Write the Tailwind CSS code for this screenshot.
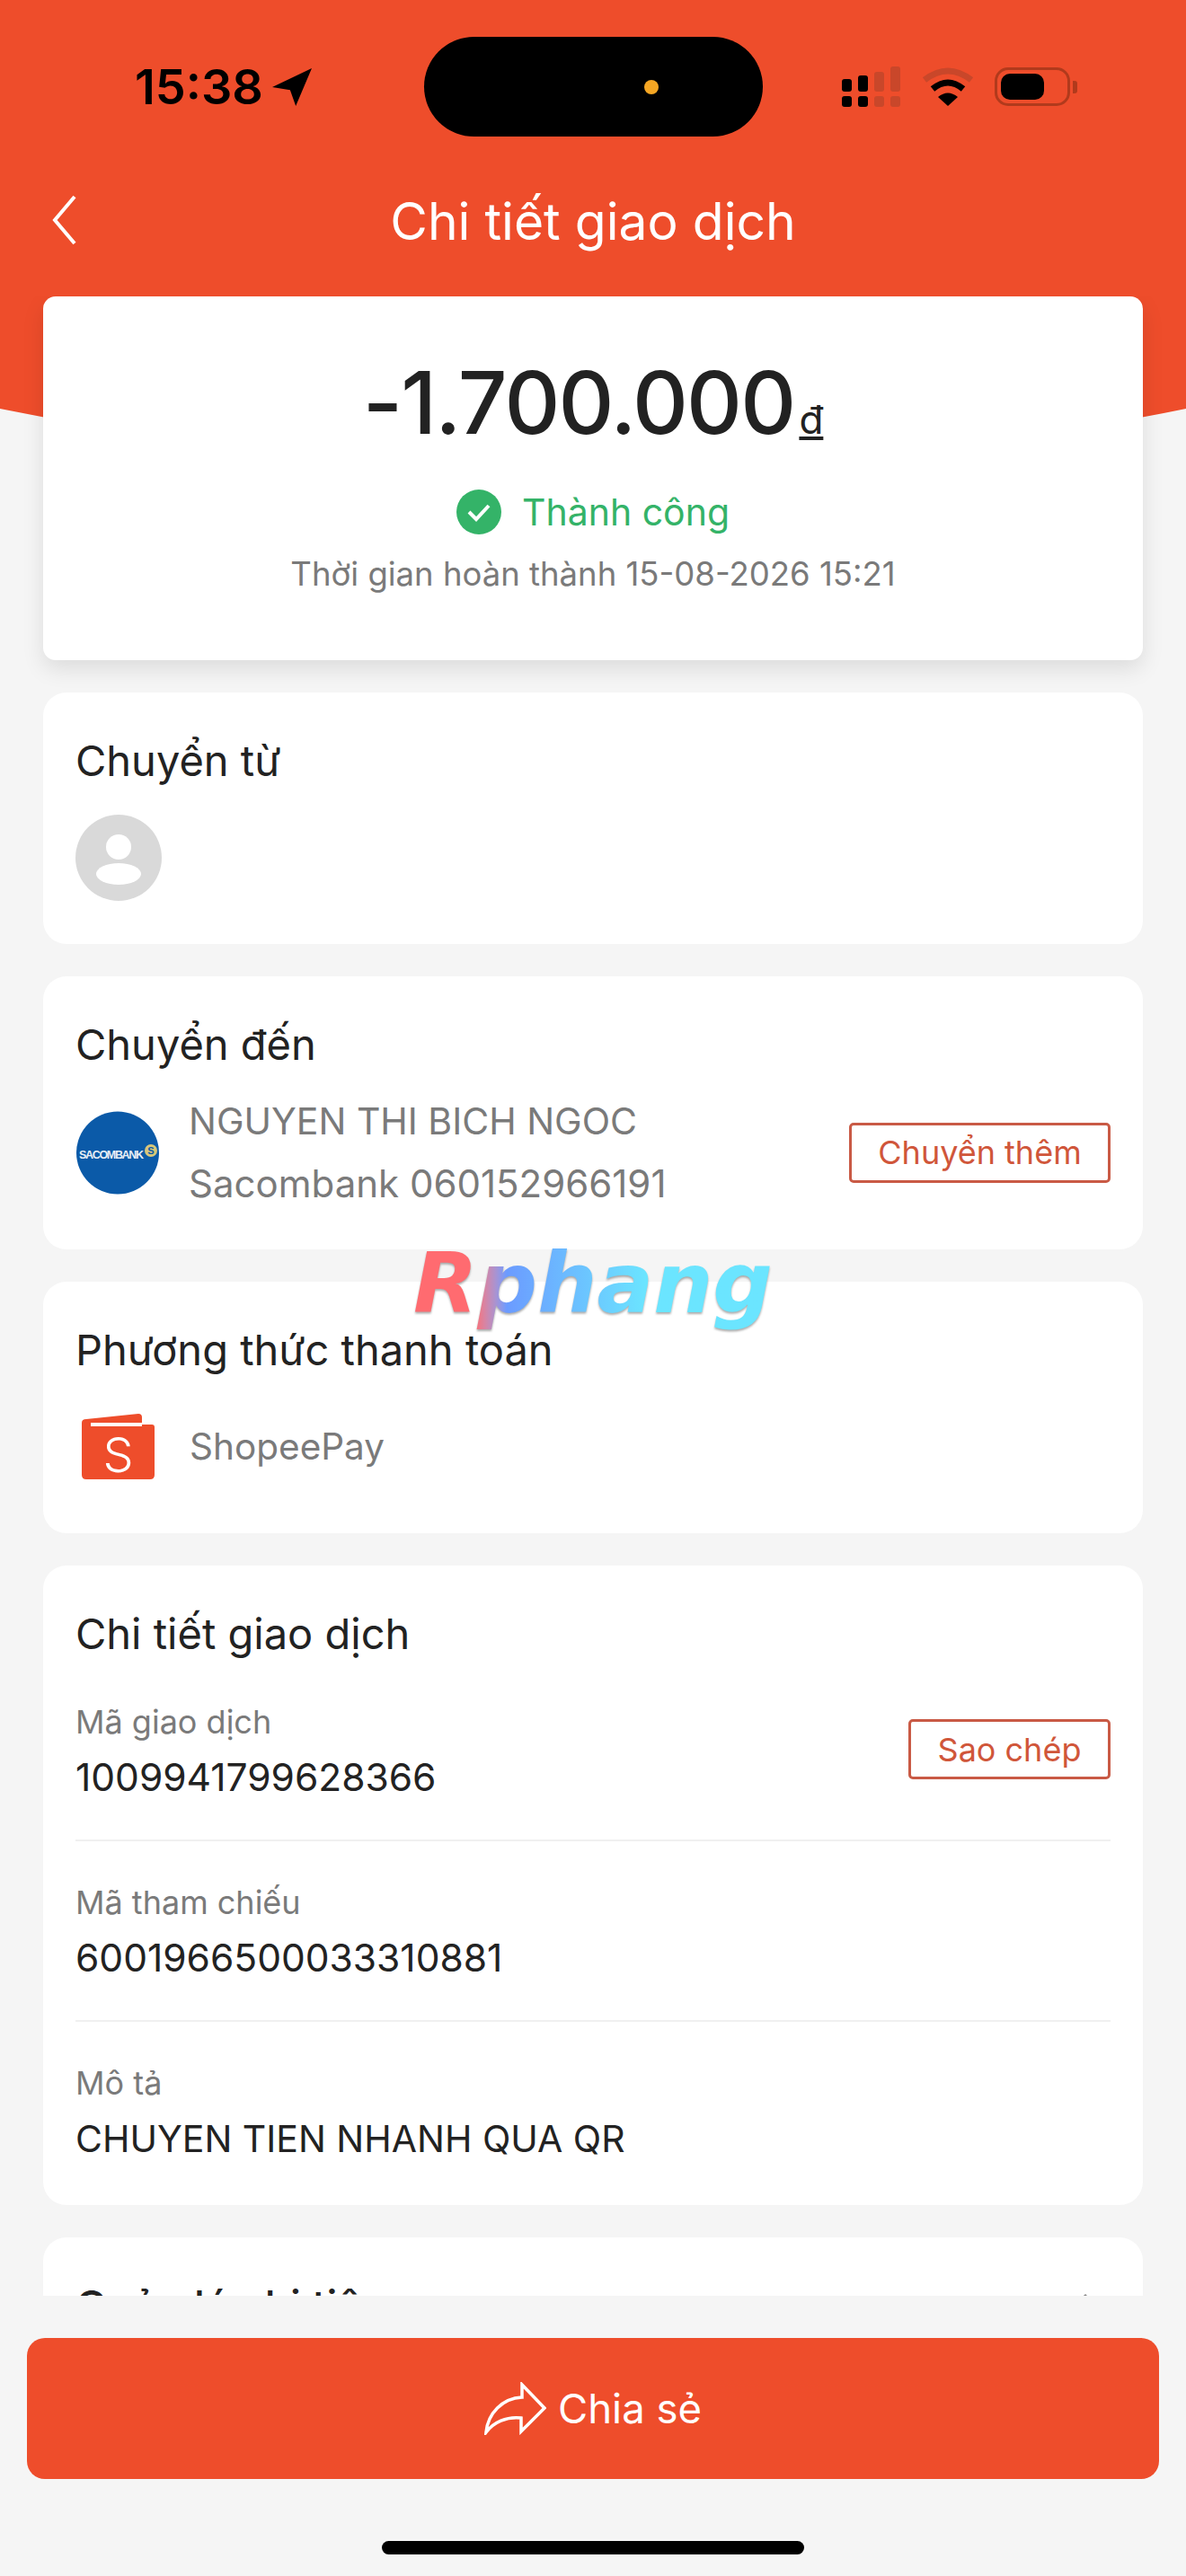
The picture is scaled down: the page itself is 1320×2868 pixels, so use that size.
<!DOCTYPE html>
<html lang="vi">
<head>
  <meta charset="UTF-8" />
  <meta name="viewport" content="width=device-width, initial-scale=1" />
  <title>Chi tiết giao dịch</title>
  <script src="https://cdn.jsdelivr.net/npm/@tailwindcss/browser@4"></script>
</head>
<body class="bg-[#f5f5f5] font-['Inter','Liberation_Sans',sans-serif] text-[#222222]">
  <div class="relative w-[1320px] h-[2868px] overflow-hidden flex flex-col">

    <!-- orange backdrop behind header -->
    <svg class="absolute top-0 left-0 w-[1320px] h-[600px]" viewBox="0 0 1320 600">
      <path d="M0 0H1320V455Q660 590 0 455Z" fill="#ee4d2b" />
    </svg>

    <!-- status bar + nav -->
    <header class="relative h-[330px] shrink-0">
      <div class="h-[196px] flex items-start pt-[41px] pl-[150px]">
        <div class="w-[322px] h-[111px] flex items-center gap-[10px]">
          <span class="text-[54px] leading-none font-semibold text-black">15:38</span>
          <svg class="w-[44px] h-[42px]" viewBox="0 0 42 40"><path d="M42 0L0 20L19 23L25 40Z" fill="#000" /></svg>
        </div>
        <div class="w-[377px] h-[111px] rounded-[56px] bg-black flex items-center justify-end pr-[116px]">
          <span class="w-[16px] h-[16px] rounded-full bg-[#f5a623]"></span>
        </div>
        <div class="ml-[88px] h-[111px] flex items-center gap-[23px]">
          <svg class="w-[66px] h-[46px]" viewBox="0 0 66 46">
            <rect x="0" y="14" width="11" height="14" rx="3" fill="#000" />
            <rect x="18" y="10" width="11" height="18" rx="3" fill="#000" />
            <rect x="36" y="6" width="11" height="22" rx="3" fill="#c9472a" />
            <rect x="54" y="0" width="11" height="28" rx="3" fill="#c9472a" />
            <rect x="0" y="33" width="11" height="12" rx="3" fill="#000" />
            <rect x="18" y="33" width="11" height="12" rx="3" fill="#000" />
            <rect x="36" y="33" width="11" height="12" rx="3" fill="#c9472a" />
            <rect x="54" y="33" width="11" height="12" rx="3" fill="#c9472a" />
          </svg>
          <svg class="w-[58px] h-[43px]" viewBox="0 0 58 43">
            <path d="M3 14Q29 -6 55 14" fill="none" stroke="#c9472a" stroke-width="7" />
            <path d="M12 24Q29 10 46 24" fill="none" stroke="#000" stroke-width="7" />
            <path d="M18 33Q29 24 40 33L29 43Z" fill="#000" />
          </svg>
          <div class="flex items-center gap-[3px]">
            <div class="w-[84px] h-[43px] rounded-[15px] border-[3px] border-[#b13a1c] p-[4px]">
              <div class="w-[48px] h-full rounded-[10px] bg-black"></div>
            </div>
            <div class="w-[5px] h-[14px] rounded-r-[3px] bg-[#b13a1c]"></div>
          </div>
        </div>
      </div>
      <div class="relative h-[100px] flex items-center justify-center">
        <svg class="absolute left-[56px] top-[20px] w-[32px] h-[58px]" viewBox="0 0 32 58">
          <path d="M27 3L5 29L27 55" fill="none" stroke="#fff" stroke-width="4" />
        </svg>
        <h1 class="text-[57px] leading-none text-white font-normal">Chi tiết giao dịch</h1>
      </div>
    </header>

    <!-- scrolling cards -->
    <main class="relative h-[2226px] shrink-0 overflow-hidden px-[48px] flex flex-col gap-[36px]">
      <section class="h-[405px] shrink-0 bg-white rounded-[14px] shadow-[0_10px_24px_rgba(0,0,0,0.1)] flex flex-col items-center pt-[68px]">
        <div class="flex items-baseline gap-[5px] h-[100px]">
          <span class="text-[96px] leading-[100px] font-medium tracking-[-1.8px]">-1.700.000</span>
          <span class="text-[44px] leading-none underline">đ</span>
        </div>
        <div class="flex items-center gap-[23px] mt-[47px]">
          <svg class="w-[50px] h-[50px]" viewBox="0 0 50 50">
            <circle cx="25" cy="25" r="25" fill="#34b368" />
            <path d="M14 25L22 33L36 18" fill="none" stroke="#fff" stroke-width="4" />
          </svg>
          <span class="text-[41px] leading-[50px] text-[#34b368]">Thành công</span>
        </div>
        <p class="mt-[22px] text-[36.5px] leading-[44px] text-[#7a7a7a]">Thời gian hoàn thành 15-08-2026 15:21</p>
      </section>

      <section class="h-[280px] shrink-0 bg-white rounded-[26px] px-[36px] pt-[48px]">
        <h2 class="text-[47px] leading-[56px]">Chuyển từ</h2>
        <svg class="mt-[32px] w-[96px] h-[96px]" viewBox="0 0 96 96">
          <circle cx="48" cy="48" r="48" fill="#d9d9d9" />
          <circle cx="48" cy="36" r="14" fill="#fff" />
          <ellipse cx="48" cy="66" rx="25" ry="12" fill="#fff" />
        </svg>
      </section>

      <section class="h-[304px] shrink-0 bg-white rounded-[26px] px-[36px] pt-[48px]">
        <h2 class="text-[47px] leading-[56px]">Chuyển đến</h2>
        <div class="flex items-center mt-[23px]">
          <svg class="ml-[1px] w-[92px] h-[93px] shrink-0" viewBox="0 0 92 93">
            <circle cx="46" cy="46.5" r="46" fill="#0b5aa8" />
            <text x="3" y="53" font-family="Liberation Sans" font-weight="700" font-size="12.5" fill="#e8eef5" textLength="72">SACOMBANK</text>
            <circle cx="83" cy="44" r="7" fill="#d8c77a" />
            <text x="83" y="48" text-anchor="middle" font-family="Liberation Sans" font-weight="700" font-size="11" fill="#0b5aa8">S</text>
          </svg>
          <div class="ml-[33px] flex-1 text-[#7a7a7a] leading-[69px]">
            <p class="text-[41px]">NGUYEN THI BICH NGOC</p>
            <p class="text-[42px]">Sacombank 060152966191</p>
          </div>
          <button class="w-[291px] h-[67px] border-[3px] border-[#c95a45] rounded-[5px] text-[36px] leading-none text-[#d0563a]">Chuyển thêm</button>
        </div>
      </section>

      <section class="h-[280px] shrink-0 bg-white rounded-[26px] px-[36px] pt-[48px]">
        <h2 class="text-[47px] leading-[56px]">Phương thức thanh toán</h2>
        <div class="flex items-center mt-[43px]">
          <svg class="ml-[7px] w-[81px] h-[73px] shrink-0" viewBox="0 0 81 73">
            <path d="M0 10Q0 6 5 6L63 0Q67 0 67 4V12H78Q81 12 81 15V68Q81 73 76 73H5Q0 73 0 68Z" fill="#ee4d2b" />
            <path d="M10 12H67" stroke="#fff" stroke-width="4" />
            <text x="40.5" y="65" text-anchor="middle" font-family="Inter" font-weight="300" font-size="54" fill="#fff">S</text>
          </svg>
          <span class="ml-[39px] text-[#7a7a7a] text-[40.5px] leading-[60px]">ShopeePay</span>
        </div>
      </section>

      <section class="h-[712px] shrink-0 bg-white rounded-[26px] px-[36px] pt-[48px]">
        <h2 class="text-[47px] leading-[56px]">Chi tiết giao dịch</h2>
        <div class="mt-[22px] h-[181px] border-b-2 border-[#f0f0f0] flex items-start justify-between pt-[24px]">
          <div>
            <p class="text-[36px] leading-[48px] text-[#7a7a7a]">Mã giao dịch</p>
            <p class="mt-[14px] text-[42.5px] leading-[48px]">1009941799628366</p>
          </div>
          <button class="mt-[21px] w-[225px] h-[67px] border-[3px] border-[#c95a45] rounded-[5px] text-[36px] leading-none text-[#d0563a]">Sao chép</button>
        </div>
        <div class="pt-[44px] h-[201px] border-b-2 border-[#f0f0f0]">
          <p class="text-[36px] leading-[48px] text-[#7a7a7a]">Mã tham chiếu</p>
          <p class="mt-[14px] text-[42.5px] leading-[48px]">6001966500033310881</p>
        </div>
        <div class="pt-[44px]">
          <p class="text-[36px] leading-[48px] text-[#7a7a7a]">Mô tả</p>
          <p class="mt-[14px] text-[41px] leading-[48px]">CHUYEN TIEN NHANH QUA QR</p>
        </div>
      </section>

      <section class="h-[280px] shrink-0 bg-white rounded-[26px] px-[36px] pt-[48px] flex items-start justify-between">
        <h2 class="text-[47px] leading-[56px] font-medium">Quản lý chi tiêu</h2>
        <svg class="mt-[14px] mr-[8px] w-[24px] h-[44px]" viewBox="0 0 24 44">
          <path d="M3 2L21 22L3 42" fill="none" stroke="#888" stroke-width="3" />
        </svg>
      </section>
    </main>

    <!-- bottom action -->
    <footer class="flex-1 px-[30px] pt-[47px]">
      <button class="w-full h-[157px] rounded-[20px] bg-[#ee4d2b] flex items-center justify-center gap-[13px] text-white text-[45.5px] leading-none">
        <svg class="w-[69px] h-[59px]" viewBox="0 0 69 59">
          <path d="M42 3L67 29L41 55V40C25 38 10 45 2 56C4 35 20 18 42 17Z" fill="none" stroke="#fff" stroke-width="3.5" />
        </svg>
        <span>Chia sẻ</span>
      </button>
      <div class="mt-[69px] mx-auto w-[470px] h-[15px] rounded-[8px] bg-black"></div>
    </footer>

    <!-- watermark -->
    <div class="absolute left-[460px] top-[1364px] font-['DejaVu_Sans',sans-serif] font-bold italic text-[93px] leading-[130px] bg-linear-to-r from-[#ff6b70] from-[17%] via-[#6b9bff] via-[26%] to-[#6be5ff] to-[65%] bg-clip-text text-transparent drop-shadow-[0_2px_1px_rgba(90,90,90,0.5)]">Rphang</div>
  </div>
</body>
</html>
